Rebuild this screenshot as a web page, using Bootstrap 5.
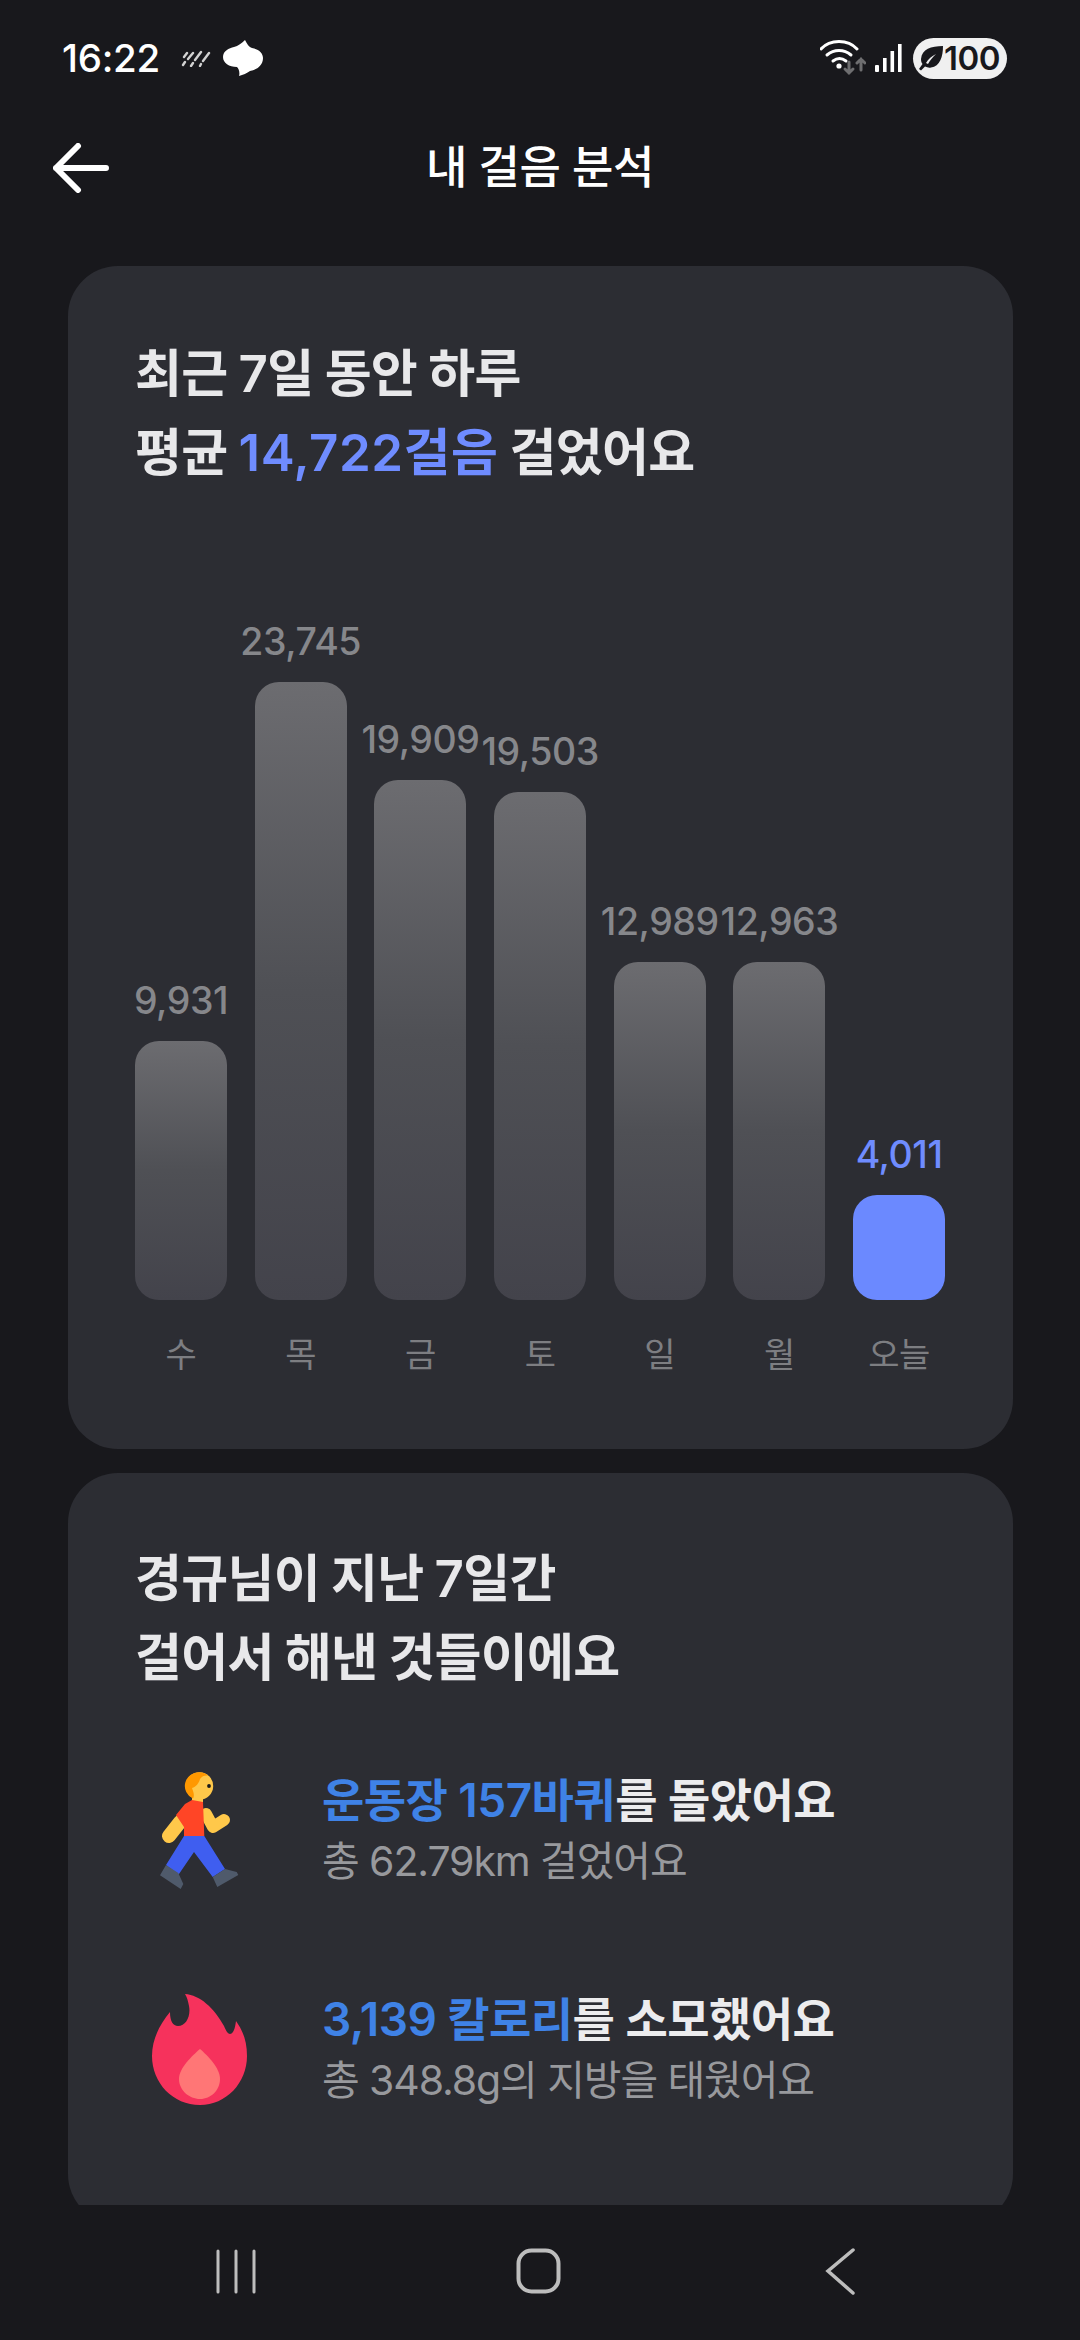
<!doctype html>
<html lang="ko">
<head>
<meta charset="utf-8">
<link href="https://cdn.jsdelivr.net/npm/bootstrap@5.3.0/dist/css/bootstrap.min.css" rel="stylesheet">
<style>
html,body{height:2340px;margin:0;background:#18181c;overflow:hidden}
body{font-family:Inter,"Noto Sans CJK KR",sans-serif;color:#f1f1f3;width:1080px}
.shell{height:2340px}
.statusrow{height:116px;padding:0 73px 0 62px;font-weight:500}
.clock{font-size:38.5px;letter-spacing:-.3px;color:#fff;line-height:1}
.rainmark{margin-left:21px}
.cloudmark{margin-left:12px}
.signalmark{margin-left:9px}
.battery{background:#f0f0f0;color:#18181c;border-radius:21px;height:41px;width:94px;margin-left:11px;font-size:33px;font-weight:600;line-height:1;padding-left:5px;letter-spacing:-.5px}
.topbar{height:104px;padding-left:53px}
.pagename{font-size:45px;font-weight:500;color:#fff;line-height:1;left:0;right:0;letter-spacing:-.4px;padding-bottom:2px}
.scrollarea{height:1985px;overflow:hidden;padding:46px 67px 0 68px}
.panel{background:#2c2d33;border-radius:50px;margin-bottom:24px}
.panel-a{height:1183px;padding:68px 67px 0}
.panel-b{height:751px;padding:66px 67px 0}
.headline{font-size:51px;font-weight:600;line-height:79px;letter-spacing:-.7px;word-spacing:-1px;color:#e8e8ea;margin:0}
.accent{color:#6f8cff;letter-spacing:.5px}
.chart{height:826px;margin-top:57px;gap:27.7px}
.barcol{width:92px}
.amount{font-size:37.5px;font-weight:500;color:#86878b;line-height:44px;margin-bottom:18px;white-space:nowrap;letter-spacing:-.45px;text-align:center;width:92px;display:flex;justify-content:center}
.pillar{width:92px;border-radius:24px;background:linear-gradient(180deg,#6c6c70 0%,#4f5055 50%,#43434b 100%)}
.pillar-now{background:#6b89ff}
.amount-now{color:#6f8cff}
.dayname{font-size:34px;color:#7d7e82;line-height:40px;margin-top:35px;text-align:center;width:92px;white-space:nowrap;letter-spacing:-.5px}
.achievements{margin-top:24px}
.achieve{height:219px}
.emojibox{width:129px;margin-right:58px;flex:none}
.mainline{font-size:46px;font-weight:600;line-height:60px;letter-spacing:-.55px;color:#ececee;white-space:nowrap}
.subline{font-size:41px;font-weight:400;line-height:62px;letter-spacing:-1.1px;color:#98999d;white-space:nowrap}
.sky{color:#3f82e6}
.softnav{height:135px;background:#18181c}
</style>
</head>
<body>
<div class="shell d-flex flex-column">
  <div class="statusrow d-flex align-items-center justify-content-between">
    <div class="d-flex align-items-center">
      <span class="clock">16:22</span>
      <svg class="rainmark" width="30" height="18" viewBox="0 0 30 18" fill="none" stroke="#d2d2d2" stroke-width="2.4" stroke-linecap="round"><path d="M2 16 4 13M7 10 12 4M10 17 12 14M14 11 20 3M19 17 20 15M22 12 28 4M3 8 6 4"/></svg>
      <svg class="cloudmark" width="40" height="36" viewBox="0 0 40 36"><path fill="#fff" d="M22 0C24 4 26 7 29 8C36 9 40 13 40 18C40 26 33 30 27 31C24 33 20 35 16 36C17 33 16 29 14 27C6 27 0 23 0 17C0 11 6 8 11 7C15 6 19 3 22 0Z"/></svg>
    </div>
    <div class="d-flex align-items-center">
      <svg width="46" height="36" viewBox="0 0 46 36" fill="none" stroke-linecap="round"><g stroke="#fff" stroke-width="3"><path d="M1 9C10 -1 28 -1 37 9"/><path d="M7 15c7-6 17-6 24 0"/><path d="M13 21c4-3 9-3 13 0"/></g><circle cx="19" cy="26" r="2.6" fill="#fff"/><g stroke="#6e6e70" stroke-width="3"><path d="M29 22v11M25 29l4 4 4-4"/><path d="M41 30V19M37 23l4-4 4 4"/></g></svg>
      <svg class="signalmark" width="27" height="28" viewBox="0 0 27 28" fill="#fff"><rect x="0" y="21" width="4" height="7" rx="1"/><rect x="8" y="14" width="3.6" height="14"/><rect x="15.500" y="7" width="3.6" height="21"/><rect x="23" y="0" width="3.6" height="28"/></svg>
      <div class="battery d-flex align-items-center">
        <svg width="26" height="26" viewBox="0 0 26 26" class="flex-none"><path fill="#18181c" d="M25 1C13 1 4 4 3 14c0 2 .5 4 1.500 5L1 24l2 1.500 4-4c2 1 4 1.500 6 1 9-1 12-11 12-21.500zM8 18c2-4 6-7 10-9-3 3-6 6-8 10z"/></svg>
        <span>100</span>
      </div>
    </div>
  </div>
  <div class="topbar position-relative d-flex align-items-center">
    <svg width="56" height="50" viewBox="0 0 56 50" fill="none" stroke="#fff" stroke-width="6" stroke-linecap="round" stroke-linejoin="round"><path d="M3 25H53M25 3 3 25 25 47"/></svg>
    <div class="pagename position-absolute text-center">내 걸음 분석</div>
  </div>
  <div class="scrollarea">
    <section class="panel panel-a">
      <h2 class="headline">최근 7일 동안 하루<br>평균 <span class="accent">14,722걸음</span> 걸었어요</h2>
      <div class="chart d-flex align-items-end">
        <div class="barcol d-flex flex-column align-items-center"><div class="amount">9,931</div><div class="pillar" style="height:259px"></div><div class="dayname">수</div></div>
        <div class="barcol d-flex flex-column align-items-center"><div class="amount">23,745</div><div class="pillar" style="height:618px"></div><div class="dayname">목</div></div>
        <div class="barcol d-flex flex-column align-items-center"><div class="amount">19,909</div><div class="pillar" style="height:520px"></div><div class="dayname">금</div></div>
        <div class="barcol d-flex flex-column align-items-center"><div class="amount">19,503</div><div class="pillar" style="height:508px"></div><div class="dayname">토</div></div>
        <div class="barcol d-flex flex-column align-items-center"><div class="amount">12,989</div><div class="pillar" style="height:338px"></div><div class="dayname">일</div></div>
        <div class="barcol d-flex flex-column align-items-center"><div class="amount">12,963</div><div class="pillar" style="height:338px"></div><div class="dayname">월</div></div>
        <div class="barcol d-flex flex-column align-items-center"><div class="amount amount-now">4,011</div><div class="pillar pillar-now" style="height:105px"></div><div class="dayname">오늘</div></div>
      </div>
    </section>
    <section class="panel panel-b">
      <h2 class="headline">경규님이 지난 7일간<br>걸어서 해낸 것들이에요</h2>
      <div class="achievements">
        <div class="d-flex align-items-center achieve">
          <div class="emojibox d-flex justify-content-center">
            <svg width="79" height="118" viewBox="0 0 79 118">
              <path fill="#ffc84a" d="M32 24h11v8H32z"/>
              <path fill="none" stroke="#ffc84a" stroke-width="14" stroke-linecap="round" d="M20 50 9 64"/>
              <path fill="none" stroke="#ffc84a" stroke-width="12" stroke-linecap="round" stroke-linejoin="round" d="M46 42 53 55 64 48"/>
              <circle cx="39.500" cy="14" r="13.700" fill="#ffc84a"/>
              <path fill="#ff9800" d="M39.500.3A13.700 13.700 0 0 0 33 26.500C35 23 33 19 32 16 36 15 39 11 40 7 42 4 45 3 48 3.500 45 1.500 43 .3 39.500.3Z"/>
              <circle cx="49" cy="14" r="1.900" fill="#1a1a1a"/>
              <path fill="#ff4526" d="M32 28 43 30 44.300 64H24V55L16 43 25 32Z"/>
              <path fill="#3f5ef0" d="M24 64H44.300L65 97 52.700 105 34 80 18.300 103 6 93Z"/>
              <path fill="#4f5a6b" d="M6 93 18.300 101 23.300 112 20.700 117 0 103.300ZM52.700 105 65 97 76.700 100 78.300 103 57.300 115Z"/>
            </svg>
          </div>
          <div><div class="mainline"><span class="sky">운동장 157바퀴</span>를 돌았어요</div><div class="subline">총 62.79km 걸었어요</div></div>
        </div>
        <div class="d-flex align-items-center achieve">
          <div class="emojibox d-flex justify-content-center">
            <svg width="95" height="111" viewBox="0 0 95 111">
              <path fill="#f6325c" d="M33 0C48 1 62 14 72 32C74 37 76 40 78 40C81 40 83 35 84 27C91 37 95 47 95 62C95 89 74 111 48 111C21 111 0 89 0 62C0 45 8 30 18 18C18 27 21 32 26 32C34 32 39 22 37 12C36 7 35 3 33 0Z"/>
              <path fill="#ff7676" d="M48 55C56 62 68 74 68 85C68 96 59 105 48 105C37 105 27 96 27 85C27 74 40 62 48 55Z"/>
            </svg>
          </div>
          <div><div class="mainline"><span class="sky">3,139 칼로리</span>를 소모했어요</div><div class="subline">총 348.8g의 지방을 태웠어요</div></div>
        </div>
      </div>
    </section>
  </div>
  <nav class="softnav position-relative">
    <svg class="position-absolute top-0 start-0" width="1080" height="135" viewBox="0 0 1080 135" fill="none" stroke="#bdbdbd" stroke-linecap="round">
      <path stroke-width="3" d="M218 46V87M236 46V87M254 46V87"/>
      <rect x="518.500" y="45.500" width="40" height="41" rx="13" stroke-width="4"/>
      <path stroke-width="3.500" d="M853 45 828 66 853 88"/>
    </svg>
  </nav>
</div>
</body>
</html>
